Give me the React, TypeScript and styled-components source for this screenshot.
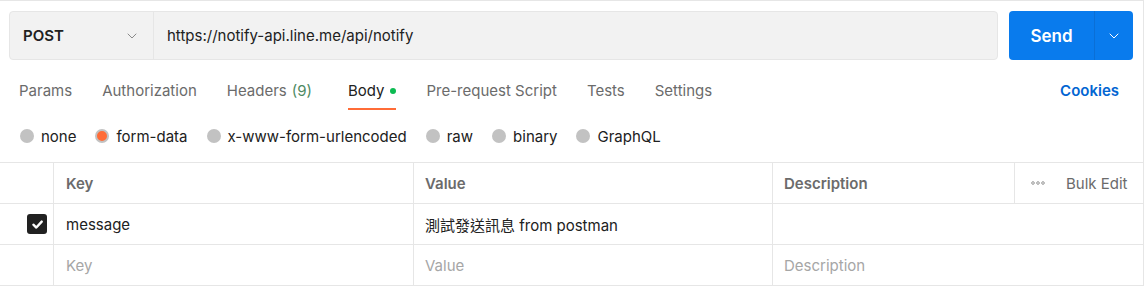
import styled, { createGlobalStyle } from 'styled-components';

const GlobalStyle = createGlobalStyle`
  html, body {
    margin: 0;
    padding: 0;
    background: #ffffff;
  }
  body {
    font-family: Inter, "Noto Sans", "Noto Sans CJK TC", sans-serif;
    font-size: 15px;
    color: #212121;
  }
`;

const tabs = [
  { label: 'Params' },
  { label: 'Authorization' },
  { label: 'Headers', count: '(9)' },
  { label: 'Body', active: true, dot: true },
  { label: 'Pre-request Script' },
  { label: 'Tests' },
  { label: 'Settings' }
];

const bodyTypes = ['none', 'form-data', 'x-www-form-urlencoded', 'raw', 'binary', 'GraphQL'];

function Chevron({ color = '#6b6b6b', size = 12 }) {
  return (
    <svg width={size} height={size} viewBox="0 0 12 12" fill="none">
      <path d="M2 4 L6 8 L10 4" stroke={color} strokeWidth="1" strokeLinecap="round" strokeLinejoin="round" />
    </svg>
  );
}

function CheckIcon() {
  return (
    <svg width="13" height="13" viewBox="0 0 12 12" fill="none">
      <path d="M2.2 6.2 L4.9 8.8 L9.9 3.3" stroke="#ffffff" strokeWidth="2.2" strokeLinecap="round" strokeLinejoin="round" />
    </svg>
  );
}

function DotsIcon() {
  return (
    <svg width="14" height="4" viewBox="0 0 14 4" fill="none">
      <circle cx="2" cy="2" r="1.3" stroke="#8a8a8a" strokeWidth="0.9" />
      <circle cx="7" cy="2" r="1.3" stroke="#8a8a8a" strokeWidth="0.9" />
      <circle cx="12" cy="2" r="1.3" stroke="#8a8a8a" strokeWidth="0.9" />
    </svg>
  );
}

export default function App() {
  return (
    <>
      <GlobalStyle />
      <Panel>
        <RequestBar>
          <UrlGroup>
            <MethodSelect>
              <MethodLabel>POST</MethodLabel>
              <Chevron color="#8a8a8a" />
            </MethodSelect>
            <UrlInput>https://notify-api.line.me/api/notify</UrlInput>
          </UrlGroup>
          <SendButton>
            <SendLabel>Send</SendLabel>
            <SendMenu>
              <Chevron color="#ffffff" />
            </SendMenu>
          </SendButton>
        </RequestBar>

        <TabBar>
          <TabList>
            {tabs.map((tab) => (
              <Tab key={tab.label} $active={tab.active}>
                {tab.label}
                {tab.count && <TabCount>{tab.count}</TabCount>}
                {tab.dot && <ActiveDot />}
              </Tab>
            ))}
          </TabList>
          <CookiesLink>Cookies</CookiesLink>
        </TabBar>

        <RadioRow>
          {bodyTypes.map((type) => (
            <RadioOption key={type}>
              <RadioCircle $checked={type === 'form-data'} />
              {type}
            </RadioOption>
          ))}
        </RadioRow>

        <Table>
          <Row>
            <CheckCell />
            <KeyCell><HeadText>Key</HeadText></KeyCell>
            <ValueCell><HeadText>Value</HeadText></ValueCell>
            <DescCell><HeadText>Description</HeadText></DescCell>
            <BulkCell>
              <DotsIcon />
              <BulkText>Bulk Edit</BulkText>
            </BulkCell>
          </Row>
          <Row>
            <CheckCell>
              <Checkbox><CheckIcon /></Checkbox>
            </CheckCell>
            <KeyCell>message</KeyCell>
            <ValueCell>測試發送訊息 from postman</ValueCell>
            <DescCell $wide />
          </Row>
          <Row>
            <CheckCell />
            <KeyCell><Placeholder>Key</Placeholder></KeyCell>
            <ValueCell><Placeholder>Value</Placeholder></ValueCell>
            <DescCell $wide><Placeholder>Description</Placeholder></DescCell>
          </Row>
        </Table>
      </Panel>
    </>
  );
}

const Panel = styled.div`
  width: 1143px;
  height: 285px;
  border-top: 1px solid #e6e6e6;
  border-right: 1px solid #e6e6e6;
  display: flex;
  flex-direction: column;
`;

const RequestBar = styled.div`
  display: flex;
  gap: 11px;
  padding: 10px 10px 0 9px;
`;

const UrlGroup = styled.div`
  flex: 1;
  display: flex;
  height: 49px;
  box-sizing: border-box;
  border: 1px solid #e6e6e6;
  border-radius: 4px;
  background: #f2f2f2;
`;

const MethodSelect = styled.div`
  width: 144px;
  box-sizing: border-box;
  display: flex;
  align-items: center;
  justify-content: space-between;
  padding: 0 15px 0 13px;
  border-right: 1px solid #e6e6e6;
`;

const MethodLabel = styled.span`
  font-weight: 600;
  font-size: 15px;
  color: #212121;
`;

const UrlInput = styled.div`
  display: flex;
  align-items: center;
  padding-left: 13px;
  font-size: 15px;
  color: #212121;
`;

const SendButton = styled.div`
  width: 124px;
  height: 49px;
  display: flex;
  border-radius: 4px;
  background: #097bed;
  color: #ffffff;
`;

const SendLabel = styled.div`
  width: 85px;
  display: flex;
  align-items: center;
  justify-content: center;
  font-size: 17px;
  font-weight: 600;
  border-right: 1px solid #0a6fd6;
`;

const SendMenu = styled.div`
  flex: 1;
  display: flex;
  align-items: center;
  justify-content: center;
`;

const TabBar = styled.div`
  display: flex;
  align-items: stretch;
  justify-content: space-between;
  height: 40px;
  margin-top: 10px;
  padding: 0 24px 0 19px;
`;

const TabList = styled.div`
  display: flex;
  gap: 30px;
`;

const Tab = styled.div`
  display: flex;
  align-items: center;
  gap: 6px;
  font-size: 15px;
  padding-top: 3px;
  color: ${({ $active }) => ($active ? '#212121' : '#6b6b6b')};
  border-bottom: 2px solid ${({ $active }) => ($active ? '#ff6c37' : 'transparent')};
  box-sizing: border-box;
`;

const TabCount = styled.span`
  color: #4f8a63;
  margin-left: -1px;
  margin-right: 6px;
`;

const ActiveDot = styled.span`
  width: 6px;
  height: 6px;
  border-radius: 50%;
  background: #0cbb52;
`;

const CookiesLink = styled.div`
  display: flex;
  align-items: center;
  font-size: 15px;
  font-weight: 600;
  color: #0265d2;
`;

const RadioRow = styled.div`
  display: flex;
  align-items: center;
  gap: 19px;
  height: 52px;
  padding-left: 20px;
`;

const RadioOption = styled.label`
  display: flex;
  align-items: center;
  gap: 7px;
  font-size: 15px;
  color: #212121;
`;

const RadioCircle = styled.span`
  width: 14px;
  height: 14px;
  box-sizing: border-box;
  border-radius: 50%;
  background: ${({ $checked }) => ($checked ? '#ff6c37' : '#c2c2c2')};
  border: ${({ $checked }) => ($checked ? '2px solid #c2c2c2' : 'none')};
`;

const Table = styled.div`
  display: flex;
  flex-direction: column;
  border-top: 1px solid #e6e6e6;
`;

const Row = styled.div`
  display: flex;
  height: 41px;
  border-bottom: 1px solid #e6e6e6;
  box-sizing: border-box;
`;

const Cell = styled.div`
  display: flex;
  align-items: center;
  box-sizing: border-box;
  font-size: 15px;
  color: #212121;
`;

const CheckCell = styled(Cell)`
  width: 54px;
  justify-content: flex-end;
  padding-right: 6px;
  border-right: 1px solid #e6e6e6;
`;

const KeyCell = styled(Cell)`
  width: 360px;
  padding-left: 12px;
  border-right: 1px solid #e6e6e6;
`;

const ValueCell = styled(Cell)`
  width: 359px;
  padding-left: 11px;
  border-right: 1px solid #e6e6e6;
`;

const DescCell = styled(Cell)`
  width: ${({ $wide }) => ($wide ? '370px' : '242px')};
  padding-left: 11px;
  border-right: ${({ $wide }) => ($wide ? 'none' : '1px solid #e6e6e6')};
`;

const BulkCell = styled(Cell)`
  flex: 1;
  gap: 21px;
  padding-left: 16px;
`;

const HeadText = styled.span`
  font-weight: 600;
  color: #6b6b6b;
`;

const BulkText = styled.span`
  color: #6b6b6b;
`;

const Placeholder = styled.span`
  color: #a6a6a6;
`;

const Checkbox = styled.span`
  width: 20px;
  height: 20px;
  border-radius: 3px;
  background: #212121;
  display: flex;
  align-items: center;
  justify-content: center;
`;
